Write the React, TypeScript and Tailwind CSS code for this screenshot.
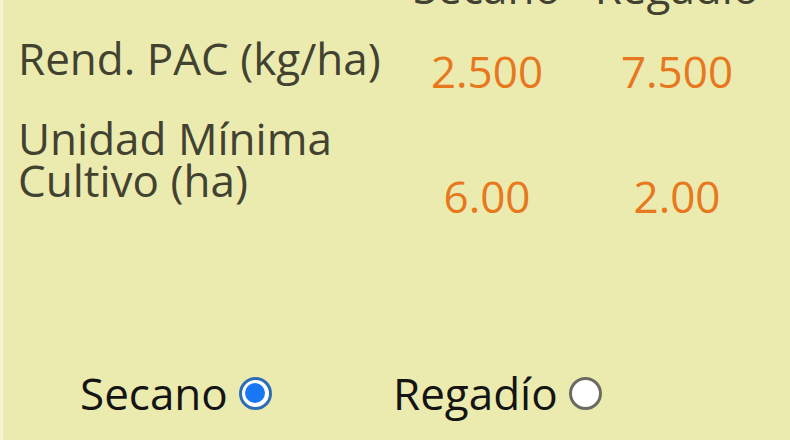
import { useState } from "react"

const rows = [
  { label: ["Rend. PAC (kg/ha)"], secano: "2.500", regadio: "7.500", pad: "pt-[13px]" },
  { label: ["Unidad Mínima", "Cultivo (ha)"], secano: "6.00", regadio: "2.00", pad: "pt-[58px]" },
]

function Radio({ checked }: { checked: boolean }) {
  return checked ? (
    <span className="flex h-[33px] w-[33px] items-center justify-center rounded-full border-[3px] border-[#2d6db5] bg-white">
      <span className="h-[20px] w-[20px] rounded-full bg-[#1877f2]" />
    </span>
  ) : (
    <span className="h-[33px] w-[33px] rounded-full border-[3px] border-[#6b6b63] bg-white" />
  )
}

export default function App() {
  const [tipo, setTipo] = useState<"secano" | "regadio">("secano")

  return (
    <div className="flex h-[440px] w-[790px] overflow-hidden bg-[#ecebaf] font-['Open_Sans',sans-serif]">
      <div className="w-[3px] shrink-0 bg-[#f4f3d2]" />
      <div className="flex flex-1 flex-col pl-[15px] text-[44px] leading-[42px]">
        {/* header scrolled off the top */}
        <div className="-mt-[34px] grid grid-cols-[374px_190px_190px] text-[#424231]">
          <span />
          <span className="text-center">Secano</span>
          <span className="text-center">Regadío</span>
        </div>

        <div className="mt-[29px] flex flex-col gap-[25px]">
          {rows.map((r) => (
            <div key={r.secano} className="grid grid-cols-[374px_190px_190px]">
              <div className="flex flex-col text-[#424231]">
                {r.label.map((l) => (
                  <span key={l}>{l}</span>
                ))}
              </div>
              <span className={`text-center text-[#e8781e] ${r.pad}`}>{r.secano}</span>
              <span className={`text-center text-[#e8781e] ${r.pad}`}>{r.regadio}</span>
            </div>
          ))}
        </div>

        <div className="mt-auto mb-[26px] flex items-center pl-[62px] text-[#141414]">
          <label className="flex w-[313px] cursor-pointer items-center gap-[11px]" onClick={() => setTipo("secano")}>
            <span>Secano</span>
            <Radio checked={tipo === "secano"} />
          </label>
          <label className="flex cursor-pointer items-center gap-[11px]" onClick={() => setTipo("regadio")}>
            <span>Regadío</span>
            <Radio checked={tipo === "regadio"} />
          </label>
        </div>
      </div>
    </div>
  )
}
